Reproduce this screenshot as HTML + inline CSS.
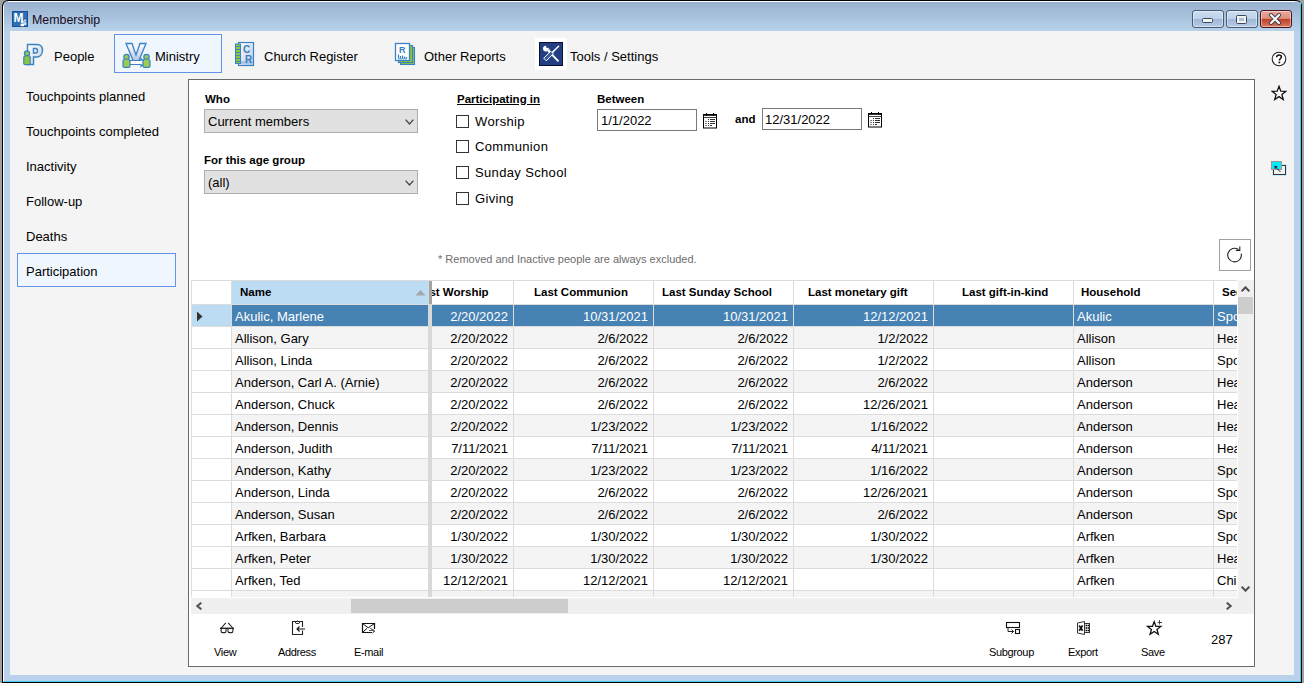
<!DOCTYPE html>
<html><head><meta charset="utf-8">
<style>
*{margin:0;padding:0;box-sizing:border-box}
html,body{width:1304px;height:683px;overflow:hidden;background:#a0a0a0}
body{position:relative;font-family:"Liberation Sans",sans-serif;font-size:13px;color:#000}
.a{position:absolute}
.t{position:absolute;white-space:nowrap;line-height:15px}
.b{font-weight:bold;font-size:11.5px;line-height:13px}
.hb{font-weight:bold;font-size:11.5px;line-height:23px}
.c{line-height:23px}
.s{font-size:11px;line-height:13px;letter-spacing:-0.35px}
#win{left:2px;top:0;width:1300px;height:683px;background:#000;border-radius:6px 6px 0 0}
#frame{left:3px;top:1px;width:1298px;height:681px;background:#b9d1ea;border-radius:5px 5px 0 0;overflow:hidden}
#hl{left:8px;top:1px;width:1287px;height:1px;background:#fff}
#hlv{left:3px;top:6px;width:1px;height:675px;background:#fff}
#cy{left:4px;top:681px;width:1297px;height:1px;background:#3cd0ee}
#cyv{left:1300px;top:2px;width:1px;height:680px;background:#3cd0ee}
#title{left:4px;top:2px;width:1296px;height:29px;background:linear-gradient(#97b1cf,#b9d2eb);border-radius:4px 4px 0 0}
#content{left:10px;top:31px;width:1284px;height:644px;background:#f4f4f4}
.wbtn{position:absolute;top:10px;width:32px;height:18px;border:1px solid #4a5a70;border-radius:3px;background:linear-gradient(#cadcf0 0%,#bdd2ea 48%,#9fb8d6 52%,#b5cce6 100%);box-shadow:inset 0 0 0 1px rgba(255,255,255,.45)}
#close{border-color:#4a1418;background:linear-gradient(#eaa898 0%,#de9080 46%,#bf4227 52%,#d87860 100%)}
.panel{position:absolute;left:188px;top:79px;width:1067px;height:588px;background:#fff;border:1px solid #6a6a6a}
.nav{left:26px}
.combo{position:absolute;left:204px;width:214px;height:24px;background:#e1e1e1;border:1px solid #adadad}
.chk{position:absolute;left:456px;width:13px;height:13px;border:1px solid #333;background:#fff}
.date{position:absolute;width:100px;height:22px;border:1px solid #7a7a7a;background:#fff}
.grid{position:absolute;left:191px;top:280px;width:1046px;height:317px;overflow:hidden;background:#fff}
.rb{letter-spacing:0.35px}
</style></head><body>
<div id="win" class="a"></div>
<div id="frame" class="a"></div>
<div id="hl" class="a"></div>
<div id="hlv" class="a"></div>
<div id="cy" class="a"></div>
<div id="cyv" class="a"></div>
<div id="title" class="a"></div>
<svg class="a" style="left:12px;top:11px" width="16" height="16" viewBox="0 0 16 16">
<rect x="0.5" y="0.5" width="15" height="15" fill="#2b70b2" stroke="#17508c"/>
<text x="1.6" y="11.2" font-family="Liberation Sans" font-weight="bold" font-size="12" fill="#fff">M</text>
<circle cx="13" cy="9.6" r="1.2" fill="#cfe0f0"/><path d="M11.6 11.2 h2.8 v3 h-2.8z" fill="#cfe0f0"/>
<circle cx="10.3" cy="10.8" r="1.4" fill="#fff"/><path d="M8.6 12.6 h3.4 v2.6 h-3.4z" fill="#fff"/>
</svg>
<div class="t" style="left:32px;top:13px;color:#1a0a1a;font-size:12.4px">Membership</div>
<div class="wbtn" style="left:1192px"></div>
<div class="wbtn" style="left:1226px"></div>
<div class="wbtn" id="close" style="left:1260px"></div>
<svg class="a" style="left:1192px;top:10px" width="100" height="18" viewBox="0 0 100 18">
<rect x="10.5" y="8.5" width="10" height="4" rx="1" fill="#f2f2f2" stroke="#3c4658" stroke-width="1"/>
<rect x="44.5" y="5.5" width="10" height="8" rx="1" fill="#f2f2f2" stroke="#3c4658" stroke-width="1"/>
<rect x="47" y="8" width="5" height="3" fill="#a8bedc"/>
<path d="M79 5 L87 13 M87 5 L79 13" stroke="#3a3a48" stroke-width="4" stroke-linecap="round"/>
<path d="M79 5 L87 13 M87 5 L79 13" stroke="#fafafa" stroke-width="2.2" stroke-linecap="round"/>
</svg>
<div id="content" class="a"></div>

<div class="a" style="left:114px;top:34px;width:108px;height:39px;background:#eff6fe;border:1px solid #6294e6"></div>
<svg class="a" style="left:22px;top:43px" width="22" height="23" viewBox="0 0 22 23">
<defs><linearGradient id="pg" x1="0" y1="0" x2="1" y2="1"><stop offset="0" stop-color="#ffffff"/><stop offset="1" stop-color="#c2cfe6"/></linearGradient></defs>
<path d="M5.5 1.5 H15 C19 1.5 20.5 4 20.5 7.5 C20.5 11.5 18 14 14.5 14 H11.5 V21.5 H5.5 Z M11.5 5.5 V10 H13.5 C15 10 15.5 9 15.5 7.7 C15.5 6.3 14.8 5.5 13.5 5.5Z" fill="url(#pg)" stroke="#3a82c4" stroke-width="1.4" fill-rule="evenodd"/>
<circle cx="5" cy="10.5" r="2.6" fill="#8cc63f" stroke="#3a82c4" stroke-width="1.2"/>
<path d="M1.8 14.5 C1.8 13 3 12.6 5 12.6 C7 12.6 8.2 13 8.2 14.5 V20.5 C8.2 21.3 7.6 21.7 6.8 21.7 H3.2 C2.4 21.7 1.8 21.3 1.8 20.5 Z" fill="#8cc63f" stroke="#3a82c4" stroke-width="1.2"/>
</svg>
<svg class="a" style="left:121px;top:42px" width="31" height="27" viewBox="0 0 31 27">
<defs><linearGradient id="vg" x1="0" y1="0" x2="0" y2="1"><stop offset="0" stop-color="#ffffff"/><stop offset="1" stop-color="#b4c2e0"/></linearGradient></defs>
<path d="M5 1.5 H11 L15 13 L19 1.5 H25 L17.5 19.5 H12.5 Z" fill="url(#vg)" stroke="#3a82c4" stroke-width="1.3"/>
<path d="M8 18.5 H20 V16.5 L24.5 20.5 L20 24.5 V22.5 H8 Z" fill="#fff" stroke="#3a82c4" stroke-width="1.2"/>
<circle cx="5.5" cy="15" r="2.7" fill="#9ccb55" stroke="#3a82c4" stroke-width="1.2"/>
<path d="M2 19 C2 17.5 3.3 17 5.5 17 C7.7 17 9 17.5 9 19 V24 C9 25 8.3 25.3 7.5 25.3 H3.5 C2.7 25.3 2 25 2 24 Z" fill="#9ccb55" stroke="#3a82c4" stroke-width="1.2"/>
<circle cx="25.5" cy="15" r="2.7" fill="#9ccb55" stroke="#3a82c4" stroke-width="1.2"/>
<path d="M22 19 C22 17.5 23.3 17 25.5 17 C27.7 17 29 17.5 29 19 V24 C29 25 28.3 25.3 27.5 25.3 H23.5 C22.7 25.3 22 25 22 24 Z" fill="#9ccb55" stroke="#3a82c4" stroke-width="1.2"/>
</svg>
<svg class="a" style="left:234px;top:41px" width="22" height="26" viewBox="0 0 22 26">
<defs><linearGradient id="rg" x1="0" y1="0" x2="1" y2="1"><stop offset="0" stop-color="#ffffff"/><stop offset="1" stop-color="#b8c8e4"/></linearGradient></defs>
<rect x="4.5" y="1.5" width="15" height="23" fill="url(#rg)" stroke="#3a82c4" stroke-width="1.2"/>
<rect x="6.5" y="20" width="12" height="3" fill="#a9c6e6"/>
<rect x="1.5" y="3" width="5" height="19.5" fill="#8cc63f" stroke="#3a82c4" stroke-width="1"/>
<path d="M1.5 5.5h5M1.5 8.5h5M1.5 11.5h5M1.5 14.5h5M1.5 17.5h5M1.5 20.5h5" stroke="#3a82c4" stroke-width="0.9"/>
<text x="9" y="12" font-family="Liberation Sans" font-weight="bold" font-size="10" fill="#3a7ec0">C</text>
<text x="11" y="22" font-family="Liberation Sans" font-weight="bold" font-size="10" fill="#3a7ec0">R</text>
</svg>
<svg class="a" style="left:394px;top:42px" width="23" height="24" viewBox="0 0 23 24">
<rect x="6.5" y="5.5" width="14" height="17" fill="#8cc63f" stroke="#3a82c4" stroke-width="1.1"/>
<rect x="4.5" y="3.5" width="14" height="17" fill="#8cc63f" stroke="#3a82c4" stroke-width="1.1"/>
<rect x="1.5" y="1.5" width="14" height="17" fill="#fff" stroke="#3a82c4" stroke-width="1.3"/>
<text x="5" y="10.5" font-family="Liberation Sans" font-weight="bold" font-size="9" fill="#3a7ec0">R</text>
<path d="M4.5 16.5 V12.5 M6.5 16.5 V14 M8.5 16.5 V13.5 M10.5 16.5 V14.5 M12.5 16.5 V15" stroke="#3a82c4" stroke-width="1.2"/>
<path d="M4 16.8 H13" stroke="#3a82c4" stroke-width="0.8"/>
</svg>
<div class="t" style="left:54px;top:49px">People</div>
<div class="t" style="left:155px;top:49px">Ministry</div>
<div class="t" style="left:264px;top:49px">Church Register</div>
<div class="t" style="left:424px;top:49px">Other Reports</div>
<div class="a" style="left:535px;top:38px;width:32px;height:32px;background:#fff"></div>
<svg class="a" style="left:539px;top:42px" width="24" height="24" viewBox="0 0 24 24">
<rect x="0.5" y="0.5" width="23" height="23" fill="#233f82" stroke="#061034"/>
<path d="M9.5 9 L19 18.8" stroke="#fff" stroke-width="1.9" stroke-linecap="round"/>
<circle cx="6.9" cy="6.6" r="2.9" fill="#fff"/>
<circle cx="8.6" cy="4.4" r="1.5" fill="#233f82"/>
<path d="M9.5 7.5 L11.2 7.2 L11 9.5 Z" fill="#fff"/>
<path d="M19.6 4.2 L13.2 10.6" stroke="#fff" stroke-width="1.5" stroke-linecap="round"/>
<path d="M14.3 11.8 L11.7 9.2 L4.7 16.2 L7.3 18.8 Z" fill="#3a5a9a" stroke="#fff" stroke-width="1"/>
</svg>
<div class="t" style="left:570px;top:49px">Tools / Settings</div>
<svg class="a" style="left:1271px;top:51px" width="16" height="16" viewBox="0 0 16 16">
<circle cx="8" cy="8" r="6.8" fill="#fff" stroke="#222" stroke-width="1.1"/>
<path d="M5.6 6.2 C5.6 4.6 6.7 3.9 8 3.9 C9.4 3.9 10.4 4.7 10.4 5.9 C10.4 7.4 8.4 7.6 8.4 9.4" fill="none" stroke="#111" stroke-width="1.5"/>
<rect x="7.5" y="10.6" width="1.7" height="1.7" fill="#111"/>
</svg>
<svg class="a" style="left:1271px;top:85px" width="16" height="16" viewBox="0 0 16 16">
<path d="M8.00,1.30 L9.76,6.17 L14.94,6.34 L10.85,9.53 L12.29,14.51 L8.00,11.60 L3.71,14.51 L5.15,9.53 L1.06,6.34 L6.24,6.17Z" fill="#fff" stroke="#111" stroke-width="1.3" stroke-linejoin="miter"/>
</svg>
<svg class="a" style="left:1270px;top:160px" width="18" height="16" viewBox="0 0 18 16">
<rect x="3.5" y="5.5" width="12" height="9" fill="#f0f0f0" stroke="#3a3030" stroke-width="1"/>
<rect x="2.5" y="4.5" width="14" height="11" fill="none" stroke="#9ee8f6" stroke-width="0.6"/>
<rect x="1.5" y="1.5" width="10" height="8" fill="#00f0f8" stroke="#a89090" stroke-width="1"/>
<path d="M10.5 12 L5 6.5" stroke="#302040" stroke-width="1"/>
<path d="M4.3 5.8 L7.8 6.3 L4.8 9.3 Z" fill="#302040"/>
</svg>

<div class="t nav" style="top:89px">Touchpoints planned</div>
<div class="t nav" style="top:124px">Touchpoints completed</div>
<div class="t nav" style="top:159px">Inactivity</div>
<div class="t nav" style="top:194px">Follow-up</div>
<div class="t nav" style="top:229px">Deaths</div>
<div class="a" style="left:17px;top:253px;width:159px;height:34px;background:#eff6fe;border:1px solid #6294e6"></div>
<div class="t nav" style="top:264px">Participation</div>

<div class="panel"></div>

<div class="t b" style="left:205px;top:93px">Who</div>
<div class="combo" style="top:109px"></div>
<div class="t" style="left:208px;top:114px">Current members</div>
<svg class="a" style="left:405px;top:119px" width="9" height="6" viewBox="0 0 9 6"><path d="M0.6 0.6 L4.5 5 L8.4 0.6" fill="none" stroke="#444" stroke-width="1.3"/></svg>
<div class="t b" style="left:204px;top:154px">For this age group</div>
<div class="combo" style="top:170px"></div>
<div class="t" style="left:208px;top:175px">(all)</div>
<svg class="a" style="left:405px;top:180px" width="9" height="6" viewBox="0 0 9 6"><path d="M0.6 0.6 L4.5 5 L8.4 0.6" fill="none" stroke="#444" stroke-width="1.3"/></svg>

<div class="t b" style="left:457px;top:93px;text-decoration:underline">Participating in</div>
<div class="chk" style="top:115px"></div><div class="t rb" style="left:475px;top:114px">Worship</div>
<div class="chk" style="top:140px"></div><div class="t rb" style="left:475px;top:139px">Communion</div>
<div class="chk" style="top:166px"></div><div class="t rb" style="left:475px;top:165px">Sunday School</div>
<div class="chk" style="top:192px"></div><div class="t rb" style="left:475px;top:191px">Giving</div>

<div class="t b" style="left:597px;top:93px">Between</div>
<div class="date" style="left:597px;top:109px"></div>
<div class="t" style="left:601px;top:113px">1/1/2022</div>
<svg class="a" style="left:703px;top:113px" width="14" height="16" viewBox="0 0 14 16">
<rect x="0.5" y="1.5" width="13" height="13.5" fill="#fff" stroke="#000" stroke-width="1"/>
<path d="M0.5 2 H13.5" stroke="#000" stroke-width="1.6"/>
<path d="M0.5 4.5 H13.5" stroke="#444" stroke-width="1"/>
<path d="M3.5 0 V2.5 M10.5 0 V2.5" stroke="#000" stroke-width="1"/>
<path d="M5 6.5 h1 M7 6.5 H12 M5 8.5 h1 M7 8.5 H12 M5 10.5 h1 M7 10.5 H12 M5 12.5 h1 M7 12.5 H9" stroke="#333" stroke-width="1"/>
<path d="M2.5 8.5 h1 M2.5 10.5 h1 M2.5 12.5 h1" stroke="#000" stroke-width="1.2"/>
</svg>
<div class="t b" style="left:735px;top:113px">and</div>
<div class="date" style="left:762px;top:108px"></div>
<div class="t" style="left:765px;top:112px">12/31/2022</div>
<svg class="a" style="left:868px;top:112px" width="14" height="16" viewBox="0 0 14 16">
<rect x="0.5" y="1.5" width="13" height="13.5" fill="#fff" stroke="#000" stroke-width="1"/>
<path d="M0.5 2 H13.5" stroke="#000" stroke-width="1.6"/>
<path d="M0.5 4.5 H13.5" stroke="#444" stroke-width="1"/>
<path d="M3.5 0 V2.5 M10.5 0 V2.5" stroke="#000" stroke-width="1"/>
<path d="M5 6.5 h1 M7 6.5 H12 M5 8.5 h1 M7 8.5 H12 M5 10.5 h1 M7 10.5 H12 M5 12.5 h1 M7 12.5 H9" stroke="#333" stroke-width="1"/>
<path d="M2.5 8.5 h1 M2.5 10.5 h1 M2.5 12.5 h1" stroke="#000" stroke-width="1.2"/>
</svg>

<div class="t s" style="left:438px;top:253px;color:#6d6d6d;letter-spacing:0">* Removed and Inactive people are always excluded.</div>
<div class="a" style="left:1219px;top:239px;width:32px;height:32px;border:1px solid #a0a0a0;background:#fff"></div>
<svg class="a" style="left:1226px;top:246px" width="18" height="18" viewBox="0 0 18 18">
<path d="M15.2 7.6 A6.8 6.8 0 1 1 12.6 3.6" fill="none" stroke="#222" stroke-width="1.1"/>
<path d="M13.8 0.5 V4.4 H9.8" fill="none" stroke="#222" stroke-width="1.1"/>
</svg>

<div class="grid"><div class="a" style="left:41px;top:1px;width:196px;height:23px;background:#bcdcf4"></div><div class="t hb" style="left:49px;top:1px;">Name</div><svg class="a" style="left:224px;top:9px" width="11" height="7"><path d="M0.5 6.5 L5.5 1 L10.5 6.5Z" fill="#a6a6a6"/></svg><div class="a" style="left:1px;top:25px;width:39px;height:22px;background:#bcdcf4"></div><svg class="a" style="left:5px;top:31px" width="8" height="11"><path d="M1 0.5 L6.5 5.5 L1 10.5Z" fill="#333"/></svg><div class="a" style="left:41px;top:25px;width:196px;height:21px;background:#4682b4"></div><div class="t c" style="left:44px;top:25px;color:#fff">Akulic, Marlene</div><div class="a" style="left:0;top:46px;width:1046px;height:1px;background:#dcdcdc"></div><div class="a" style="left:41px;top:47px;width:196px;height:21px;background:#f4f4f4"></div><div class="t c" style="left:44px;top:47px;color:#000">Allison, Gary</div><div class="a" style="left:0;top:68px;width:1046px;height:1px;background:#dcdcdc"></div><div class="a" style="left:41px;top:69px;width:196px;height:21px;background:#ffffff"></div><div class="t c" style="left:44px;top:69px;color:#000">Allison, Linda</div><div class="a" style="left:0;top:90px;width:1046px;height:1px;background:#dcdcdc"></div><div class="a" style="left:41px;top:91px;width:196px;height:21px;background:#f4f4f4"></div><div class="t c" style="left:44px;top:91px;color:#000">Anderson, Carl A. (Arnie)</div><div class="a" style="left:0;top:112px;width:1046px;height:1px;background:#dcdcdc"></div><div class="a" style="left:41px;top:113px;width:196px;height:21px;background:#ffffff"></div><div class="t c" style="left:44px;top:113px;color:#000">Anderson, Chuck</div><div class="a" style="left:0;top:134px;width:1046px;height:1px;background:#dcdcdc"></div><div class="a" style="left:41px;top:135px;width:196px;height:21px;background:#f4f4f4"></div><div class="t c" style="left:44px;top:135px;color:#000">Anderson, Dennis</div><div class="a" style="left:0;top:156px;width:1046px;height:1px;background:#dcdcdc"></div><div class="a" style="left:41px;top:157px;width:196px;height:21px;background:#ffffff"></div><div class="t c" style="left:44px;top:157px;color:#000">Anderson, Judith</div><div class="a" style="left:0;top:178px;width:1046px;height:1px;background:#dcdcdc"></div><div class="a" style="left:41px;top:179px;width:196px;height:21px;background:#f4f4f4"></div><div class="t c" style="left:44px;top:179px;color:#000">Anderson, Kathy</div><div class="a" style="left:0;top:200px;width:1046px;height:1px;background:#dcdcdc"></div><div class="a" style="left:41px;top:201px;width:196px;height:21px;background:#ffffff"></div><div class="t c" style="left:44px;top:201px;color:#000">Anderson, Linda</div><div class="a" style="left:0;top:222px;width:1046px;height:1px;background:#dcdcdc"></div><div class="a" style="left:41px;top:223px;width:196px;height:21px;background:#f4f4f4"></div><div class="t c" style="left:44px;top:223px;color:#000">Anderson, Susan</div><div class="a" style="left:0;top:244px;width:1046px;height:1px;background:#dcdcdc"></div><div class="a" style="left:41px;top:245px;width:196px;height:21px;background:#ffffff"></div><div class="t c" style="left:44px;top:245px;color:#000">Arfken, Barbara</div><div class="a" style="left:0;top:266px;width:1046px;height:1px;background:#dcdcdc"></div><div class="a" style="left:41px;top:267px;width:196px;height:21px;background:#f4f4f4"></div><div class="t c" style="left:44px;top:267px;color:#000">Arfken, Peter</div><div class="a" style="left:0;top:288px;width:1046px;height:1px;background:#dcdcdc"></div><div class="a" style="left:41px;top:289px;width:196px;height:21px;background:#ffffff"></div><div class="t c" style="left:44px;top:289px;color:#000">Arfken, Ted</div><div class="a" style="left:0;top:310px;width:1046px;height:1px;background:#dcdcdc"></div><div class="a" style="left:41px;top:311px;width:196px;height:21px;background:#f4f4f4"></div><div class="a" style="left:0;top:332px;width:1046px;height:1px;background:#dcdcdc"></div><div class="a" style="left:0;top:24px;width:1046px;height:1px;background:#dcdcdc"></div><div class="a" style="left:241px;top:0;width:805px;height:317px;overflow:hidden"><div class="t hb" style="left:-16px;top:1px">Last Worship</div><div class="t hb" style="left:102px;top:1px">Last Communion</div><div class="t hb" style="left:230px;top:1px">Last Sunday School</div><div class="t hb" style="left:376px;top:1px">Last monetary gift</div><div class="t hb" style="left:530px;top:1px">Last gift-in-kind</div><div class="t hb" style="left:649px;top:1px">Household</div><div class="t hb" style="left:790px;top:1px">Sequence</div><div class="a" style="left:0;top:25px;width:805px;height:21px;background:#4682b4"></div><div class="t c" style="left:-58px;top:25px;width:134px;text-align:right;color:#fff">2/20/2022</div><div class="t c" style="left:82px;top:25px;width:134px;text-align:right;color:#fff">10/31/2021</div><div class="t c" style="left:222px;top:25px;width:134px;text-align:right;color:#fff">10/31/2021</div><div class="t c" style="left:362px;top:25px;width:134px;text-align:right;color:#fff">12/12/2021</div><div class="t c" style="left:645px;top:25px;color:#fff">Akulic</div><div class="t c" style="left:785px;top:25px;color:#fff">Spouse</div><div class="a" style="left:0;top:47px;width:805px;height:21px;background:#f4f4f4"></div><div class="t c" style="left:-58px;top:47px;width:134px;text-align:right;color:#000">2/20/2022</div><div class="t c" style="left:82px;top:47px;width:134px;text-align:right;color:#000">2/6/2022</div><div class="t c" style="left:222px;top:47px;width:134px;text-align:right;color:#000">2/6/2022</div><div class="t c" style="left:362px;top:47px;width:134px;text-align:right;color:#000">1/2/2022</div><div class="t c" style="left:645px;top:47px;color:#000">Allison</div><div class="t c" style="left:785px;top:47px;color:#000">Head</div><div class="a" style="left:0;top:69px;width:805px;height:21px;background:#ffffff"></div><div class="t c" style="left:-58px;top:69px;width:134px;text-align:right;color:#000">2/20/2022</div><div class="t c" style="left:82px;top:69px;width:134px;text-align:right;color:#000">2/6/2022</div><div class="t c" style="left:222px;top:69px;width:134px;text-align:right;color:#000">2/6/2022</div><div class="t c" style="left:362px;top:69px;width:134px;text-align:right;color:#000">1/2/2022</div><div class="t c" style="left:645px;top:69px;color:#000">Allison</div><div class="t c" style="left:785px;top:69px;color:#000">Spouse</div><div class="a" style="left:0;top:91px;width:805px;height:21px;background:#f4f4f4"></div><div class="t c" style="left:-58px;top:91px;width:134px;text-align:right;color:#000">2/20/2022</div><div class="t c" style="left:82px;top:91px;width:134px;text-align:right;color:#000">2/6/2022</div><div class="t c" style="left:222px;top:91px;width:134px;text-align:right;color:#000">2/6/2022</div><div class="t c" style="left:362px;top:91px;width:134px;text-align:right;color:#000">2/6/2022</div><div class="t c" style="left:645px;top:91px;color:#000">Anderson</div><div class="t c" style="left:785px;top:91px;color:#000">Head</div><div class="a" style="left:0;top:113px;width:805px;height:21px;background:#ffffff"></div><div class="t c" style="left:-58px;top:113px;width:134px;text-align:right;color:#000">2/20/2022</div><div class="t c" style="left:82px;top:113px;width:134px;text-align:right;color:#000">2/6/2022</div><div class="t c" style="left:222px;top:113px;width:134px;text-align:right;color:#000">2/6/2022</div><div class="t c" style="left:362px;top:113px;width:134px;text-align:right;color:#000">12/26/2021</div><div class="t c" style="left:645px;top:113px;color:#000">Anderson</div><div class="t c" style="left:785px;top:113px;color:#000">Head</div><div class="a" style="left:0;top:135px;width:805px;height:21px;background:#f4f4f4"></div><div class="t c" style="left:-58px;top:135px;width:134px;text-align:right;color:#000">2/20/2022</div><div class="t c" style="left:82px;top:135px;width:134px;text-align:right;color:#000">1/23/2022</div><div class="t c" style="left:222px;top:135px;width:134px;text-align:right;color:#000">1/23/2022</div><div class="t c" style="left:362px;top:135px;width:134px;text-align:right;color:#000">1/16/2022</div><div class="t c" style="left:645px;top:135px;color:#000">Anderson</div><div class="t c" style="left:785px;top:135px;color:#000">Head</div><div class="a" style="left:0;top:157px;width:805px;height:21px;background:#ffffff"></div><div class="t c" style="left:-58px;top:157px;width:134px;text-align:right;color:#000">7/11/2021</div><div class="t c" style="left:82px;top:157px;width:134px;text-align:right;color:#000">7/11/2021</div><div class="t c" style="left:222px;top:157px;width:134px;text-align:right;color:#000">7/11/2021</div><div class="t c" style="left:362px;top:157px;width:134px;text-align:right;color:#000">4/11/2021</div><div class="t c" style="left:645px;top:157px;color:#000">Anderson</div><div class="t c" style="left:785px;top:157px;color:#000">Head</div><div class="a" style="left:0;top:179px;width:805px;height:21px;background:#f4f4f4"></div><div class="t c" style="left:-58px;top:179px;width:134px;text-align:right;color:#000">2/20/2022</div><div class="t c" style="left:82px;top:179px;width:134px;text-align:right;color:#000">1/23/2022</div><div class="t c" style="left:222px;top:179px;width:134px;text-align:right;color:#000">1/23/2022</div><div class="t c" style="left:362px;top:179px;width:134px;text-align:right;color:#000">1/16/2022</div><div class="t c" style="left:645px;top:179px;color:#000">Anderson</div><div class="t c" style="left:785px;top:179px;color:#000">Spouse</div><div class="a" style="left:0;top:201px;width:805px;height:21px;background:#ffffff"></div><div class="t c" style="left:-58px;top:201px;width:134px;text-align:right;color:#000">2/20/2022</div><div class="t c" style="left:82px;top:201px;width:134px;text-align:right;color:#000">2/6/2022</div><div class="t c" style="left:222px;top:201px;width:134px;text-align:right;color:#000">2/6/2022</div><div class="t c" style="left:362px;top:201px;width:134px;text-align:right;color:#000">12/26/2021</div><div class="t c" style="left:645px;top:201px;color:#000">Anderson</div><div class="t c" style="left:785px;top:201px;color:#000">Spouse</div><div class="a" style="left:0;top:223px;width:805px;height:21px;background:#f4f4f4"></div><div class="t c" style="left:-58px;top:223px;width:134px;text-align:right;color:#000">2/20/2022</div><div class="t c" style="left:82px;top:223px;width:134px;text-align:right;color:#000">2/6/2022</div><div class="t c" style="left:222px;top:223px;width:134px;text-align:right;color:#000">2/6/2022</div><div class="t c" style="left:362px;top:223px;width:134px;text-align:right;color:#000">2/6/2022</div><div class="t c" style="left:645px;top:223px;color:#000">Anderson</div><div class="t c" style="left:785px;top:223px;color:#000">Spouse</div><div class="a" style="left:0;top:245px;width:805px;height:21px;background:#ffffff"></div><div class="t c" style="left:-58px;top:245px;width:134px;text-align:right;color:#000">1/30/2022</div><div class="t c" style="left:82px;top:245px;width:134px;text-align:right;color:#000">1/30/2022</div><div class="t c" style="left:222px;top:245px;width:134px;text-align:right;color:#000">1/30/2022</div><div class="t c" style="left:362px;top:245px;width:134px;text-align:right;color:#000">1/30/2022</div><div class="t c" style="left:645px;top:245px;color:#000">Arfken</div><div class="t c" style="left:785px;top:245px;color:#000">Spouse</div><div class="a" style="left:0;top:267px;width:805px;height:21px;background:#f4f4f4"></div><div class="t c" style="left:-58px;top:267px;width:134px;text-align:right;color:#000">1/30/2022</div><div class="t c" style="left:82px;top:267px;width:134px;text-align:right;color:#000">1/30/2022</div><div class="t c" style="left:222px;top:267px;width:134px;text-align:right;color:#000">1/30/2022</div><div class="t c" style="left:362px;top:267px;width:134px;text-align:right;color:#000">1/30/2022</div><div class="t c" style="left:645px;top:267px;color:#000">Arfken</div><div class="t c" style="left:785px;top:267px;color:#000">Head</div><div class="a" style="left:0;top:289px;width:805px;height:21px;background:#ffffff"></div><div class="t c" style="left:-58px;top:289px;width:134px;text-align:right;color:#000">12/12/2021</div><div class="t c" style="left:82px;top:289px;width:134px;text-align:right;color:#000">12/12/2021</div><div class="t c" style="left:222px;top:289px;width:134px;text-align:right;color:#000">12/12/2021</div><div class="t c" style="left:645px;top:289px;color:#000">Arfken</div><div class="t c" style="left:785px;top:289px;color:#000">Child</div><div class="a" style="left:0;top:311px;width:805px;height:21px;background:#f4f4f4"></div><div class="a" style="left:81px;top:0;width:1px;height:400px;background:#dcdcdc"></div><div class="a" style="left:221px;top:0;width:1px;height:400px;background:#dcdcdc"></div><div class="a" style="left:361px;top:0;width:1px;height:400px;background:#dcdcdc"></div><div class="a" style="left:501px;top:0;width:1px;height:400px;background:#dcdcdc"></div><div class="a" style="left:641px;top:0;width:1px;height:400px;background:#dcdcdc"></div><div class="a" style="left:781px;top:0;width:1px;height:400px;background:#dcdcdc"></div></div><div class="a" style="left:0;top:0;width:1046px;height:1px;background:#dcdcdc"></div><div class="a" style="left:0;top:0;width:1px;height:317px;background:#dcdcdc"></div><div class="a" style="left:40px;top:0;width:1px;height:317px;background:#dcdcdc"></div><div class="a" style="left:237px;top:1px;width:4px;height:317px;background:#d9d9d9"></div><div class="a" style="left:238px;top:1px;width:3px;height:23px;background:#a3a3a3"></div></div>
<div class="a" style="left:1238px;top:280px;width:16px;height:334px;background:#f0f0f0"></div>
<div class="a" style="left:191px;top:598px;width:1063px;height:16px;background:#f0f0f0"></div>
<div class="a" style="left:1238px;top:297px;width:15px;height:17px;background:#cdcdcd"></div>
<div class="a" style="left:351px;top:599px;width:217px;height:14px;background:#cdcdcd"></div>
<svg class="a" style="left:1241px;top:286px" width="9" height="6"><path d="M0.7 5.3 L4.5 1.3 L8.3 5.3" fill="none" stroke="#505050" stroke-width="2"/></svg>
<svg class="a" style="left:1241px;top:586px" width="9" height="6"><path d="M0.7 0.7 L4.5 4.7 L8.3 0.7" fill="none" stroke="#505050" stroke-width="2"/></svg>
<svg class="a" style="left:196px;top:602px" width="6" height="8"><path d="M5.3 0.7 L1.3 4 L5.3 7.3" fill="none" stroke="#505050" stroke-width="2"/></svg>
<svg class="a" style="left:1226px;top:602px" width="6" height="8"><path d="M0.7 0.7 L4.7 4 L0.7 7.3" fill="none" stroke="#505050" stroke-width="2"/></svg>

<svg class="a" style="left:219px;top:622px" width="16" height="12" viewBox="0 0 16 12">
<path d="M6.8 0.8 L2.3 6 M9.2 0.8 L13.7 6" stroke="#222" stroke-width="1.1"/>
<path d="M1 6.3 H15" stroke="#222" stroke-width="1.4"/>
<path d="M2.1 6.3 V9.3 C2.1 10.2 2.7 10.6 3.6 10.6 H5.6 C6.5 10.6 7 10.2 7 9.3 V6.3" fill="none" stroke="#222" stroke-width="1.1"/>
<path d="M9 6.3 V9.3 C9 10.2 9.5 10.6 10.4 10.6 H12.4 C13.3 10.6 13.9 10.2 13.9 9.3 V6.3" fill="none" stroke="#222" stroke-width="1.1"/>
</svg>
<svg class="a" style="left:291px;top:620px" width="16" height="16" viewBox="0 0 16 16">
<path d="M11.5 7 V1.5 H1.5 V14.5 H11.5 V10.5" fill="none" stroke="#222" stroke-width="1.1"/>
<path d="M4 1.5 L5 3.5 H8 L9 1.5 M6.5 0.5 V1.5" fill="none" stroke="#333" stroke-width="1"/>
<path d="M14 9 H6 M8.5 6.5 L6 9 L8.5 11.5" fill="none" stroke="#111" stroke-width="1.1"/>
</svg>
<svg class="a" style="left:361px;top:622px" width="16" height="14" viewBox="0 0 16 14">
<path d="M13.5 7 V1.5 H1.5 V10.5 H11" fill="none" stroke="#111" stroke-width="1.2"/>
<path d="M1.5 1.5 L7.2 5.8 L13.5 1.5 M1.5 10.5 L6 6.3 M9.3 5.8 L13.5 10" fill="none" stroke="#111" stroke-width="1"/>
<path d="M8 8.5 H12.5 M11.5 7 L13.5 9 L11.5 11.5" fill="none" stroke="#444" stroke-width="0.9"/>
</svg>
<svg class="a" style="left:1005px;top:621px" width="16" height="14" viewBox="0 0 16 14">
<rect x="1.5" y="1.5" width="13" height="5" fill="none" stroke="#111" stroke-width="1.1"/>
<rect x="10.5" y="8.5" width="4" height="4" fill="none" stroke="#111" stroke-width="1.1"/>
<path d="M3 6.5 V10.5 H8.5 M6.5 8.5 L8.5 10.5 L6.5 12.5" fill="none" stroke="#222" stroke-width="1"/>
</svg>
<svg class="a" style="left:1076px;top:620px" width="15" height="16" viewBox="0 0 15 16">
<path d="M1.5 3 L8.5 1.5 V14.5 L1.5 13 Z" fill="#fff" stroke="#333" stroke-width="1"/>
<rect x="8.5" y="3.5" width="5" height="9" fill="#fff" stroke="#333" stroke-width="1"/>
<path d="M3.2 5.5 L6.6 10.8 M6.6 5.5 L3.2 10.8" stroke="#111" stroke-width="1.7"/>
<path d="M9.5 5.5 H13 M9.5 8 H13 M9.5 10.5 H13" stroke="#000" stroke-width="1.3" stroke-dasharray="1.6 0.5"/>
</svg>
<svg class="a" style="left:1146px;top:619px" width="18" height="17" viewBox="0 0 18 17">
<path d="M8.20,2.60 L9.90,7.25 L14.86,7.44 L10.96,10.50 L12.31,15.26 L8.20,12.50 L4.09,15.26 L5.44,10.50 L1.54,7.44 L6.50,7.25Z" fill="#fff" stroke="#111" stroke-width="1.3"/>
<path d="M13.5 1 V5.5 M11.5 3.5 H16" stroke="#333" stroke-width="0.9"/>
</svg>
<div class="t s" style="left:214px;top:646px">View</div>
<div class="t s" style="left:278px;top:646px">Address</div>
<div class="t s" style="left:354px;top:646px">E-mail</div>
<div class="t s" style="left:989px;top:646px">Subgroup</div>
<div class="t s" style="left:1068px;top:646px">Export</div>
<div class="t s" style="left:1141px;top:646px">Save</div>
<div class="t" style="left:1211px;top:632px">287</div>
</body></html>
